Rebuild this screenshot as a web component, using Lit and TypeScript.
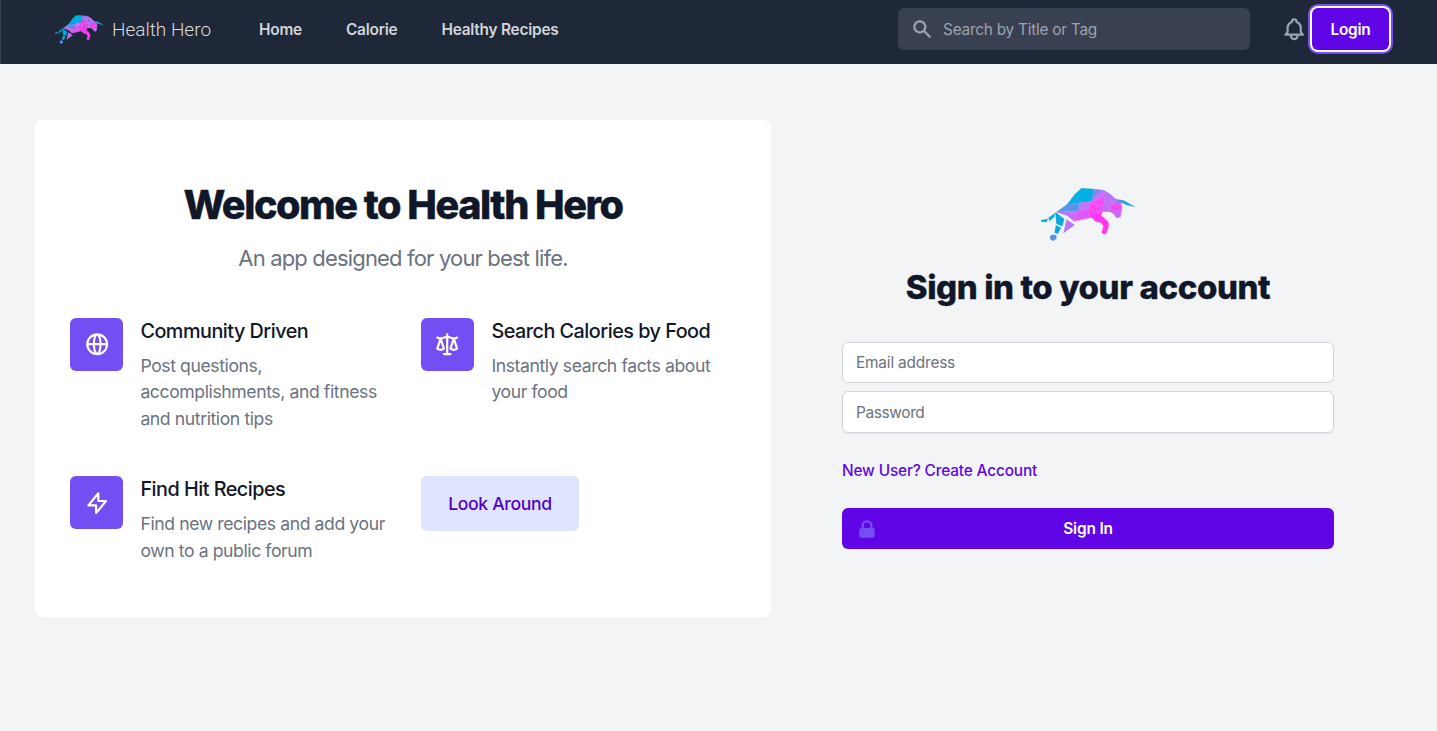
import { LitElement, html, css, svg } from "lit";
import { customElement } from "lit/decorators.js";

const facets: [string, string][] = [
  ["#00b0e4", "155,24 192,26 186,63 150,68 135,42"],
  ["#06ace5", "135,42 150,68 112,72"],
  ["#5a95e8", "112,72 150,68 146,92 80,95"],
  ["#8a86ee", "192,26 222,30 186,63"],
  ["#b975f7", "222,30 240,40 262,60 250,72 226,50"],
  ["#cd6cf8", "222,30 226,50 186,63"],
  ["#b37af6", "80,95 146,92 112,106"],
  ["#cf6af6", "146,92 112,106 132,123"],
  ["#c873f7", "150,68 186,63 175,88 146,92"],
  ["#f24cf7", "186,63 226,50 222,76 205,74"],
  ["#ff45f5", "186,63 205,74 200,92 175,88"],
  ["#c070f6", "226,50 250,72 238,80 222,76"],
  ["#e552f8", "205,74 222,76 218,94 200,92"],
  ["#c26ff5", "222,76 238,80 242,94 218,94"],
  ["#df58f7", "146,92 175,88 182,112 132,123"],
  ["#fb40f5", "175,88 200,92 206,104 182,112"],
  ["#b76ef6", "262,60 274,72 250,72"],
  ["#f545f5", "250,72 274,72 277,82 262,94 248,90 238,80"],
  ["#c46bf6", "238,80 248,90 262,94 277,82 272,111 260,113 253,102 242,95"],
  ["#fb40f5", "200,92 218,94 214,106 182,112 206,103"],
  ["#ff35f3", "185,111 206,103 219,109 235,124 237,136 230,159 222,162 216,157 221,137 215,128 197,123"],
  ["#5a8fe8", "257,57 281,60 290,71 270,68"],
  ["#10a8e2", "281,60 315,79 288,73"],
  ["#b976f5", "110,117 134,134 101,158"],
  ["#08a9df", "77,96 103,116 97,138 79,130"],
  ["#08a9df", "78,135 93,142 84,160 74,157"],
  ["#5a8fe8", "66,163 79,165 79,175 71,181 62,178 60,168"],
  ["#08a9df", "56,112 76,98 73,109 59,122"],
  ["#08a9df", "33,120 53,116 50,125 34,124"],
];

const bull = html`<svg class="bull" viewBox="33 23 283 159" preserveAspectRatio="none">
  ${facets.map(([c, p]) => svg`<polygon points=${p} fill=${c} stroke=${c} stroke-width="0.8" stroke-linejoin="round"></polygon>`)}
</svg>`;

const outline = (d: string) => html`<svg class="glyph" viewBox="0 0 24 24">
  <path d=${d} fill="none" stroke="currentColor" stroke-width="2" stroke-linecap="round" stroke-linejoin="round"></path>
</svg>`;

const globe = "M21 12a9 9 0 01-9 9m9-9a9 9 0 00-9-9m9 9H3m9 9a9 9 0 01-9-9m9 9c1.657 0 3-4.03 3-9s-1.343-9-3-9m0 18c-1.657 0-3-4.03-3-9s1.343-9 3-9m-9 9a9 9 0 019-9";
const scale = "M3 6l3 1m0 0l-3 9a5.002 5.002 0 006.001 0M6 7l3 9M6 7l6-2m6 2l3-1m-3 1l-3 9a5.002 5.002 0 006.001 0M18 7l3 9m-3-9l-6-2m0-2v2m0 16V5m0 16H9m3 0h3";
const bolt = "M13 10V3L4 14h7v7l9-11h-7z";
const bell = "M15 17h5l-1.405-1.405A2.032 2.032 0 0118 14.158V11a6.002 6.002 0 00-4-5.659V5a2 2 0 10-4 0v.341C7.67 6.165 6 8.388 6 11v3.159c0 .538-.214 1.055-.595 1.436L4 17h5m6 0v1a3 3 0 11-6 0v-1m6 0H9";

@customElement("app-root")
export class AppRoot extends LitElement {
  static styles = css`
    * { box-sizing: border-box; margin: 0; }
    :host {
      display: block;
      height: 731px;
      overflow: hidden;
      background: #f3f4f6;
      color: #101729;
      font-family: Inter, "Liberation Sans", sans-serif;
    }
    svg { display: block; flex: none; }
    a { text-decoration: none; color: inherit; }
    header {
      height: 64px;
      background: #1f2838;
      border-left: 1px solid #374151;
      display: flex;
      align-items: flex-start;
      padding: 0 48px 0 54px;
    }
    .brand { display: flex; align-items: flex-start; width: 204px; padding-top: 15px; }
    .brand .bull { width: 49px; height: 29px; }
    .brand span {
      margin: 3px 0 0 8px;
      font: 300 19px/24px Roboto, sans-serif;
      color: #d9dadb;
      white-space: nowrap;
    }
    nav { display: flex; gap: 44px; padding-top: 19px; flex: 1; }
    nav a { font-size: 15.4px; line-height: 22px; font-weight: 600; letter-spacing: -0.22px; color: #d1d5db; white-space: nowrap; }
    .search {
      width: 352px; height: 42px; margin-top: 8px;
      background: #394052; border-radius: 6px;
      display: flex; align-items: center; gap: 10px; padding-left: 13px;
      color: #9ca3af; font-size: 15.4px; letter-spacing: -0.25px;
    }
    .search svg { width: 22px; height: 22px; }
    .bell { width: 26.4px; height: 26.4px; margin: 16px 0 0 31px; color: #9ca3af; }
    .bell .glyph { width: 100%; height: 100%; }
    .login {
      width: 77px; height: 42px; margin: 8px 0 0 4.6px;
      border-radius: 6px; background: #6006e6; color: #fff;
      box-shadow: 0 0 0 2px #fff, 0 0 0 4px #724ef3;
      display: flex; align-items: center; justify-content: center;
      font-size: 15.4px; font-weight: 600; letter-spacing: -0.2px;
    }
    main { display: flex; padding: 56px 103px 0 35px; justify-content: space-between; }
    .card {
      width: 736px; height: 497px; background: #fff; border-radius: 8px;
      padding: 62px 35px 0;
    }
    h1 {
      text-align: center; font-size: 39.6px; line-height: 46px; font-weight: 800;
      letter-spacing: -1.46px; white-space: nowrap; -webkit-text-stroke: 0.4px currentColor;
    }
    .lead { text-align: center; margin-top: 15px; font-size: 22px; line-height: 31px; letter-spacing: -0.83px; color: #6b7280; }
    .grid { display: grid; grid-template-columns: 315px 315px; column-gap: 36px; grid-template-rows: 158.4px auto; margin-top: 44px; }
    .item { display: flex; gap: 17.4px; }
    .tile {
      width: 53px; height: 53px; flex: none; border-radius: 6px; background: #724ef3;
      color: #fff; display: grid; place-items: center;
    }
    .tile .glyph { width: 26.4px; height: 26.4px; }
    .globe .glyph, .bolt .glyph { margin-left: 1px; }
    h3 { font-size: 19.8px; line-height: 26px; font-weight: 500; letter-spacing: -0.5px; white-space: nowrap; }
    .item p { margin-top: 9px; font-size: 17.6px; line-height: 26.4px; letter-spacing: -0.4px; color: #6b7280; white-space: nowrap; }
    .look {
      width: 158px; height: 55px; border-radius: 6px; background: #e0e5ff; color: #5300c9;
      display: flex; align-items: center; justify-content: center;
      font-size: 17.6px; font-weight: 500; letter-spacing: -0.33px;
    }
    .form { width: 492px; padding-top: 68px; display: flex; flex-direction: column; }
    .form .bull { width: 94px; height: 53px; align-self: center; }
    h2 {
      text-align: center; margin-top: 25px; font-size: 33px; line-height: 42px; font-weight: 800;
      letter-spacing: -0.41px; white-space: nowrap; -webkit-text-stroke: 0.3px currentColor;
    }
    .field {
      height: 41px; margin-top: 34px; border: 1px solid #d1d5db; border-radius: 6px; background: #fff;
      display: flex; align-items: center; padding-left: 13px; font-size: 15.4px; letter-spacing: -0.18px; color: #6b7280;
    }
    .second { height: 42px; margin-top: 8px; letter-spacing: -0.35px; box-shadow: 0 1px 2px rgba(0, 0, 0, 0.05); }
    .create { margin-top: 27px; font-size: 15.4px; line-height: 22px; font-weight: 500; letter-spacing: -0.16px; color: #6006e6; }
    .submit {
      margin-top: 26px; height: 41px; border-radius: 6px; background: #6006e6; color: #fff;
      display: grid; grid-template-columns: 1fr auto 1fr; align-items: center; padding: 0 14px;
      font-size: 15.4px; font-weight: 600; letter-spacing: -0.15px;
    }
    .submit svg { width: 22px; height: 22px; color: #724ef3; }
  `;

  item(name: string, icon: string, title: string, lines: string[]) {
    return html`<div class="item">
      <div class="tile ${name}">${outline(icon)}</div>
      <div>
        <h3>${title}</h3>
        <p>${lines.map((l, i) => html`${i ? html`<br />` : ""}${l}`)}</p>
      </div>
    </div>`;
  }

  render() {
    return html`
      <header>
        <a class="brand">${bull}<span>Health Hero</span></a>
        <nav><a>Home</a><a>Calorie</a><a>Healthy Recipes</a></nav>
        <div class="search">
          <svg viewBox="0 0 20 20"><path fill="currentColor" fill-rule="evenodd" d="M8 4a4 4 0 100 8 4 4 0 000-8zM2 8a6 6 0 1110.89 3.476l4.817 4.817a1 1 0 01-1.414 1.414l-4.816-4.816A6 6 0 012 8z"></path></svg>
          <span>Search by Title or Tag</span>
        </div>
        <div class="bell">${outline(bell)}</div>
        <a class="login">Login</a>
      </header>
      <main>
        <section class="card">
          <h1>Welcome to Health Hero</h1>
          <p class="lead">An app designed for your best life.</p>
          <div class="grid">
            ${this.item("globe", globe, "Community Driven", ["Post questions,", "accomplishments, and fitness", "and nutrition tips"])}
            ${this.item("scale", scale, "Search Calories by Food", ["Instantly search facts about", "your food"])}
            ${this.item("bolt", bolt, "Find Hit Recipes", ["Find new recipes and add your", "own to a public forum"])}
            <a class="look">Look Around</a>
          </div>
        </section>
        <section class="form">
          ${bull}
          <h2>Sign in to your account</h2>
          <div class="field">Email address</div>
          <div class="field second">Password</div>
          <a class="create">New User? Create Account</a>
          <div class="submit">
            <svg viewBox="0 0 20 20"><path fill="currentColor" fill-rule="evenodd" d="M5 9V7a5 5 0 0110 0v2a2 2 0 012 2v5a2 2 0 01-2 2H5a2 2 0 01-2-2v-5a2 2 0 012-2zm8-2v2H7V7a3 3 0 016 0z"></path></svg>
            <span>Sign In</span>
          </div>
        </section>
      </main>
    `;
  }
}
